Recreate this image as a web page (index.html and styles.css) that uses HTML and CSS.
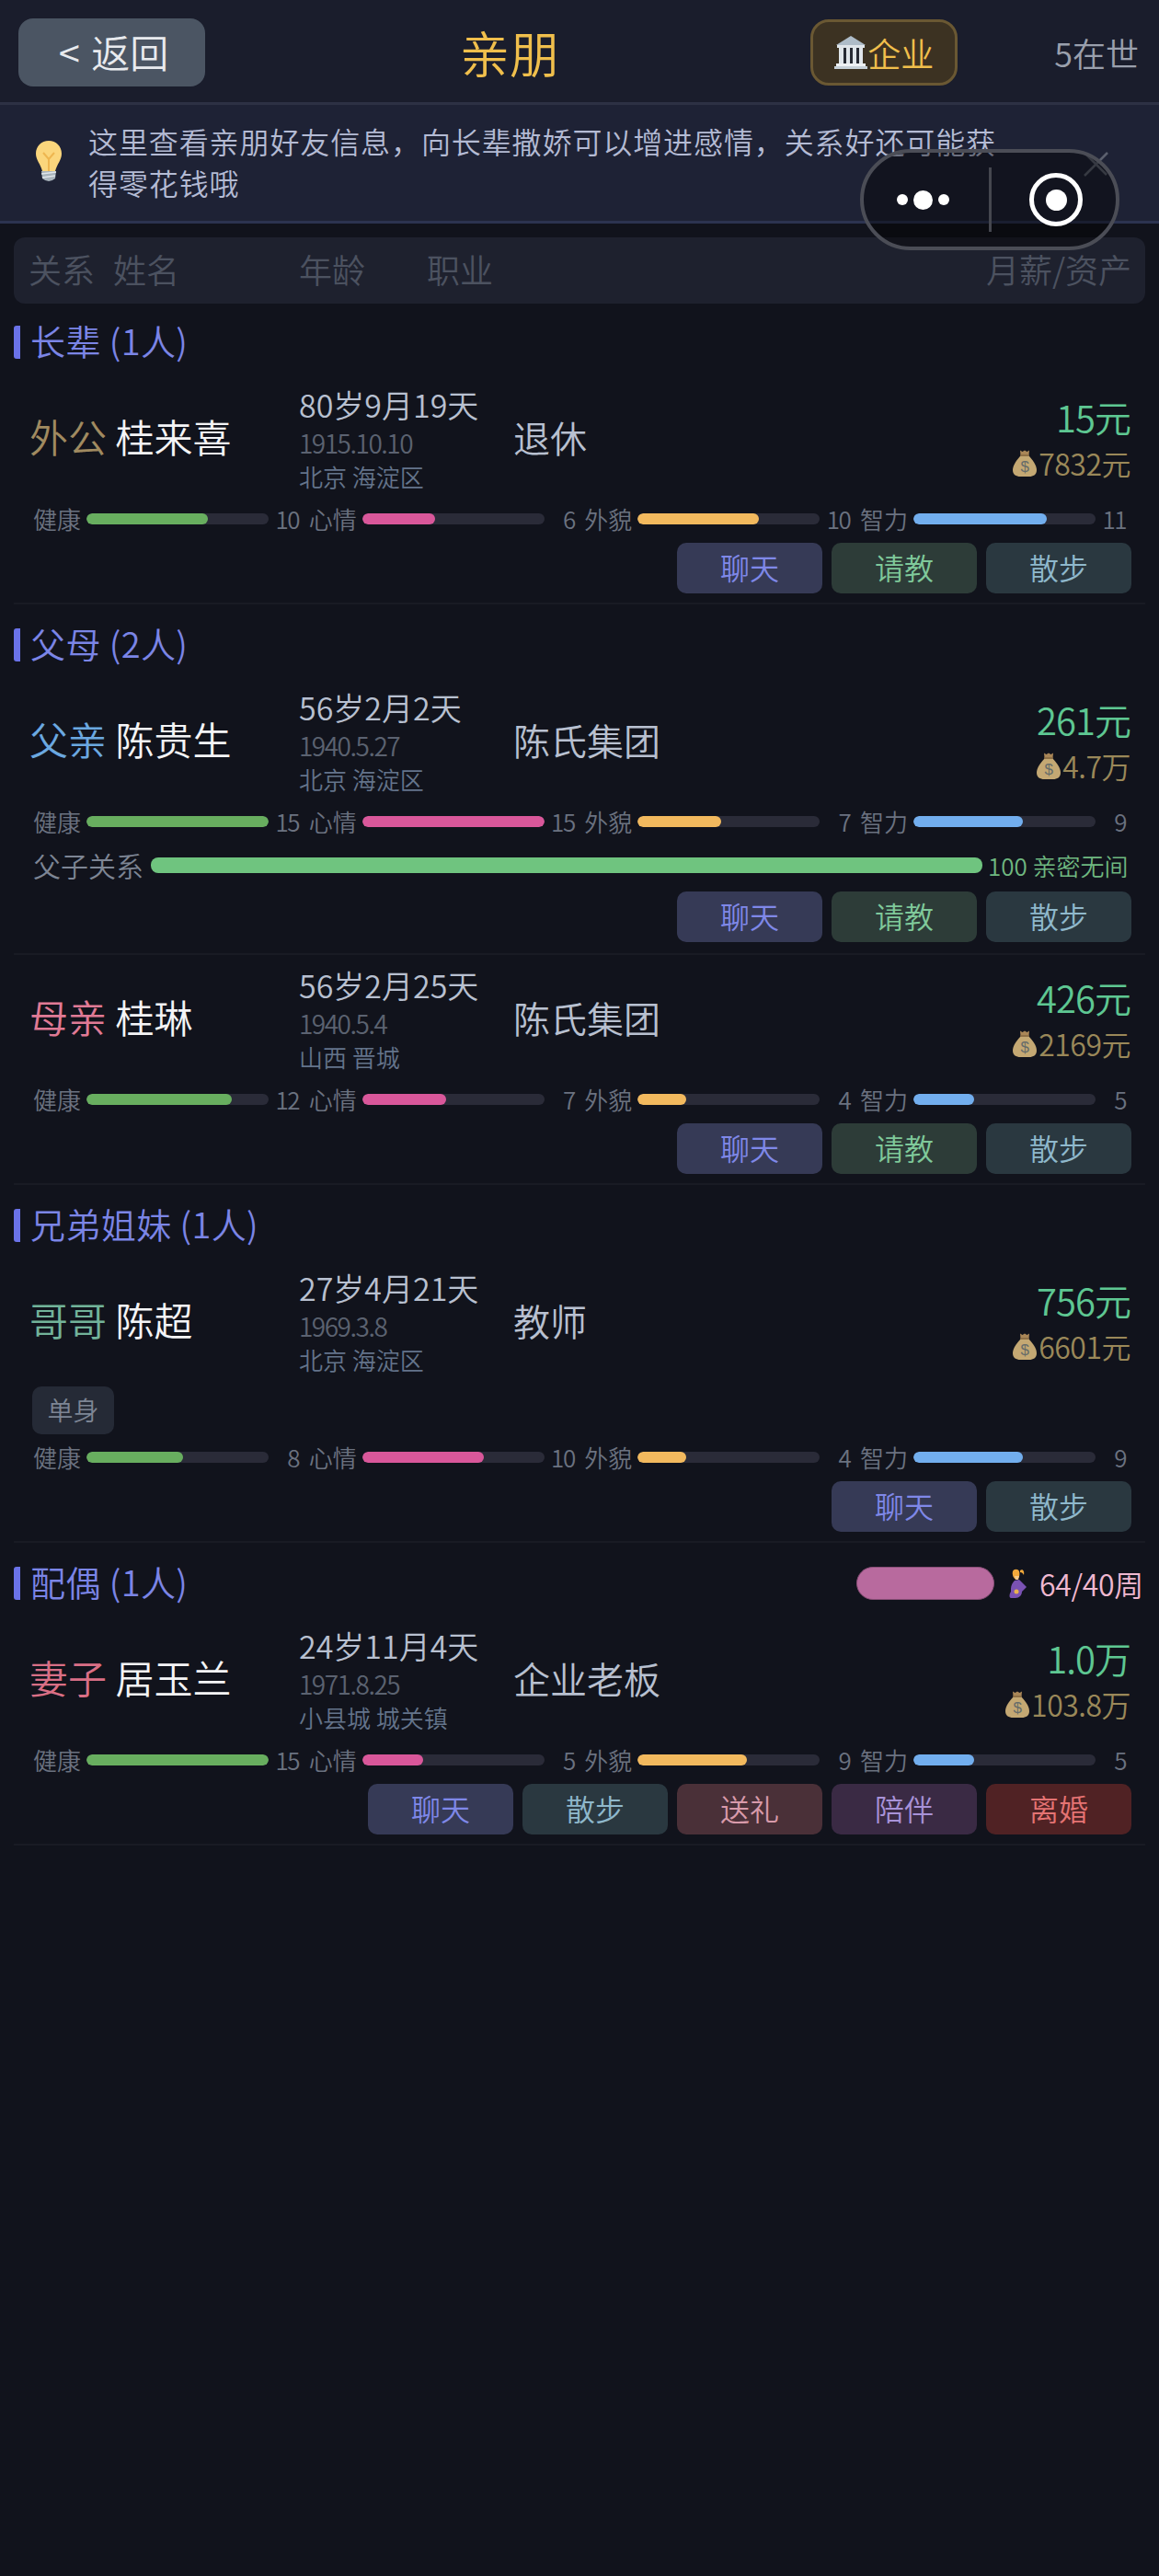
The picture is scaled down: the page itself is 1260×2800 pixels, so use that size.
FILE: index.html
```html
<!DOCTYPE html>
<html lang="zh-CN">
<head>
<meta charset="UTF-8">
<meta name="viewport" content="width=device-width, initial-scale=1.0">
<title>亲朋</title>
<link rel="stylesheet" href="styles.css">
</head>
<body>

<!-- 顶部 -->
<div class="topbar">
  <div class="back">&lt; 返回</div>
  <div class="title">亲朋</div>
  <div class="ent">
    <svg class="ent-icon" width="36" height="36" viewBox="0 0 36 36">
      <path d="M18 0 L34 10 L2 10 Z" fill="#aebcc8"/>
      <rect x="3" y="10" width="30" height="3" fill="#dfe5ea"/>
      <rect x="5" y="13" width="5" height="17" fill="#dfe5ea"/>
      <rect x="10" y="13" width="3" height="17" fill="#262a33"/>
      <rect x="13" y="13" width="4" height="17" fill="#dfe5ea"/>
      <rect x="17" y="13" width="3" height="17" fill="#262a33"/>
      <rect x="20" y="13" width="4" height="17" fill="#dfe5ea"/>
      <rect x="24" y="13" width="3" height="17" fill="#262a33"/>
      <rect x="27" y="13" width="4" height="17" fill="#dfe5ea"/>
      <rect x="2" y="30" width="32" height="3" fill="#eef1f4"/>
      <rect x="0" y="33" width="36" height="3" fill="#c6d0d8"/>
    </svg>
    <span>企业</span>
  </div>
  <div class="count">5在世</div>
</div>

<!-- 提示 -->
<div class="tip">
  <svg class="bulb" width="28" height="45" viewBox="0 0 28 45">
    <path d="M14 0 C6 0 0 6 0 14 C0 21 5 25 7 33 L21 33 C23 25 28 21 28 14 C28 6 22 0 14 0 Z" fill="#fbd67c"/>
    <path d="M8 13 L14 20 L20 13 M14 20 L14 33" fill="none" stroke="#eeb650" stroke-width="2"/>
    <path d="M6 33 L22 33 L21 41 Q14 47 7 41 Z" fill="#a9b4bc"/>
    <path d="M6 36 L22 34 M7 40 L21 38" stroke="#dfe5ea" stroke-width="1.500"/>
  </svg>
  <div class="tip-text">这里查看亲朋好友信息，向长辈撒娇可以增进感情，关系好还可能获得零花钱哦</div>
  <svg class="tip-close" width="27" height="27" viewBox="0 0 27 27">
    <path d="M1 26 L26 1 M3 3 L25 25" stroke="#5b606e" stroke-width="2.500" fill="none"/>
  </svg>
</div>

<!-- 小程序胶囊 -->
<div class="capsule">
  <span class="dot"></span><span class="dot dot-big"></span><span class="dot"></span>
  <span class="capsule-line"></span>
  <span class="target"><span class="target-in"></span></span>
</div>

<!-- 表头 -->
<div class="thead">
  <span class="th-rel">关系</span>
  <span class="th-name">姓名</span>
  <span class="th-age">年龄</span>
  <span class="th-job">职业</span>
  <span class="th-money">月薪/资产</span>
</div>

<!-- 长辈 -->
<div class="section">
  <div class="sec-head"><span class="sec-title">长辈 (1人)</span></div>
  <div class="row">
    <div class="main">
      <div class="who"><span class="rel c-tan">外公</span> 桂来喜</div>
      <div class="info">
        <div class="age">80岁9月19天</div>
        <div class="date">1915.10.10</div>
        <div class="place">北京 海淀区</div>
      </div>
      <div class="job">退休</div>
      <div class="money">
        <div class="pay">15元</div>
        <div class="assets">
          <svg class="bag" width="26" height="30" viewBox="0 0 26 30"><path d="M8 1.500 L10.500 3 L13 1.500 L15.500 3 L18 1.500 L17.500 7 L8.500 7 Z" fill="#a98657"/><path d="M9 7 C4 12 0 18 0 23 C0 28 4 30 8 30 L18 30 C22 30 26 28 26 23 C26 18 22 12 17 7 Z" fill="#c4a873"/><rect x="8.500" y="6" width="9" height="2" fill="#8f7046"/><text x="13" y="25" text-anchor="middle" font-size="17" fill="#666c6a">$</text></svg>
          <span>7832元</span>
        </div>
      </div>
    </div>
    <div class="stats">
      <div class="stat"><span class="lab">健康</span><span class="track"><span class="fill f-health" style="width:66.6%"></span></span><span class="val">10</span></div>
      <div class="stat"><span class="lab">心情</span><span class="track"><span class="fill f-mood" style="width:40%"></span></span><span class="val">6</span></div>
      <div class="stat"><span class="lab">外貌</span><span class="track"><span class="fill f-looks" style="width:66.6%"></span></span><span class="val">10</span></div>
      <div class="stat"><span class="lab">智力</span><span class="track"><span class="fill f-iq" style="width:73.3%"></span></span><span class="val">11</span></div>
    </div>
    <div class="btns">
      <span class="btn b-chat">聊天</span><span class="btn b-ask">请教</span><span class="btn b-walk">散步</span>
    </div>
  </div>
</div>

<!-- 父母 -->
<div class="section">
  <div class="sec-head"><span class="sec-title">父母 (2人)</span></div>
  <div class="row">
    <div class="main">
      <div class="who"><span class="rel c-blue">父亲</span> 陈贵生</div>
      <div class="info">
        <div class="age">56岁2月2天</div>
        <div class="date">1940.5.27</div>
        <div class="place">北京 海淀区</div>
      </div>
      <div class="job">陈氏集团</div>
      <div class="money">
        <div class="pay">261元</div>
        <div class="assets">
          <svg class="bag" width="26" height="30" viewBox="0 0 26 30"><path d="M8 1.500 L10.500 3 L13 1.500 L15.500 3 L18 1.500 L17.500 7 L8.500 7 Z" fill="#a98657"/><path d="M9 7 C4 12 0 18 0 23 C0 28 4 30 8 30 L18 30 C22 30 26 28 26 23 C26 18 22 12 17 7 Z" fill="#c4a873"/><rect x="8.500" y="6" width="9" height="2" fill="#8f7046"/><text x="13" y="25" text-anchor="middle" font-size="17" fill="#666c6a">$</text></svg>
          <span>4.7万</span>
        </div>
      </div>
    </div>
    <div class="stats">
      <div class="stat"><span class="lab">健康</span><span class="track"><span class="fill f-health" style="width:100%"></span></span><span class="val">15</span></div>
      <div class="stat"><span class="lab">心情</span><span class="track"><span class="fill f-mood" style="width:100%"></span></span><span class="val">15</span></div>
      <div class="stat"><span class="lab">外貌</span><span class="track"><span class="fill f-looks" style="width:46%"></span></span><span class="val">7</span></div>
      <div class="stat"><span class="lab">智力</span><span class="track"><span class="fill f-iq" style="width:60%"></span></span><span class="val">9</span></div>
    </div>
    <div class="bond">
      <span class="bond-lab">父子关系</span>
      <span class="bond-bar"></span>
      <span class="bond-val">100 亲密无间</span>
    </div>
    <div class="btns btns-bond">
      <span class="btn b-chat">聊天</span><span class="btn b-ask">请教</span><span class="btn b-walk">散步</span>
    </div>
  </div>
  <div class="row">
    <div class="main">
      <div class="who"><span class="rel c-pink">母亲</span> 桂琳</div>
      <div class="info">
        <div class="age">56岁2月25天</div>
        <div class="date">1940.5.4</div>
        <div class="place">山西 晋城</div>
      </div>
      <div class="job">陈氏集团</div>
      <div class="money">
        <div class="pay">426元</div>
        <div class="assets">
          <svg class="bag" width="26" height="30" viewBox="0 0 26 30"><path d="M8 1.500 L10.500 3 L13 1.500 L15.500 3 L18 1.500 L17.500 7 L8.500 7 Z" fill="#a98657"/><path d="M9 7 C4 12 0 18 0 23 C0 28 4 30 8 30 L18 30 C22 30 26 28 26 23 C26 18 22 12 17 7 Z" fill="#c4a873"/><rect x="8.500" y="6" width="9" height="2" fill="#8f7046"/><text x="13" y="25" text-anchor="middle" font-size="17" fill="#666c6a">$</text></svg>
          <span>2169元</span>
        </div>
      </div>
    </div>
    <div class="stats">
      <div class="stat"><span class="lab">健康</span><span class="track"><span class="fill f-health" style="width:80%"></span></span><span class="val">12</span></div>
      <div class="stat"><span class="lab">心情</span><span class="track"><span class="fill f-mood" style="width:46%"></span></span><span class="val">7</span></div>
      <div class="stat"><span class="lab">外貌</span><span class="track"><span class="fill f-looks" style="width:26.6%"></span></span><span class="val">4</span></div>
      <div class="stat"><span class="lab">智力</span><span class="track"><span class="fill f-iq" style="width:33.3%"></span></span><span class="val">5</span></div>
    </div>
    <div class="btns">
      <span class="btn b-chat">聊天</span><span class="btn b-ask">请教</span><span class="btn b-walk">散步</span>
    </div>
  </div>
</div>

<!-- 兄弟姐妹 -->
<div class="section">
  <div class="sec-head"><span class="sec-title">兄弟姐妹 (1人)</span></div>
  <div class="row">
    <div class="main">
      <div class="who"><span class="rel c-teal">哥哥</span> 陈超</div>
      <div class="info">
        <div class="age">27岁4月21天</div>
        <div class="date">1969.3.8</div>
        <div class="place">北京 海淀区</div>
      </div>
      <div class="job">教师</div>
      <div class="money">
        <div class="pay">756元</div>
        <div class="assets">
          <svg class="bag" width="26" height="30" viewBox="0 0 26 30"><path d="M8 1.500 L10.500 3 L13 1.500 L15.500 3 L18 1.500 L17.500 7 L8.500 7 Z" fill="#a98657"/><path d="M9 7 C4 12 0 18 0 23 C0 28 4 30 8 30 L18 30 C22 30 26 28 26 23 C26 18 22 12 17 7 Z" fill="#c4a873"/><rect x="8.500" y="6" width="9" height="2" fill="#8f7046"/><text x="13" y="25" text-anchor="middle" font-size="17" fill="#666c6a">$</text></svg>
          <span>6601元</span>
        </div>
      </div>
    </div>
    <div class="tags"><span class="tag">单身</span></div>
    <div class="stats stats-tag">
      <div class="stat"><span class="lab">健康</span><span class="track"><span class="fill f-health" style="width:53%"></span></span><span class="val">8</span></div>
      <div class="stat"><span class="lab">心情</span><span class="track"><span class="fill f-mood" style="width:66.6%"></span></span><span class="val">10</span></div>
      <div class="stat"><span class="lab">外貌</span><span class="track"><span class="fill f-looks" style="width:26.6%"></span></span><span class="val">4</span></div>
      <div class="stat"><span class="lab">智力</span><span class="track"><span class="fill f-iq" style="width:60%"></span></span><span class="val">9</span></div>
    </div>
    <div class="btns">
      <span class="btn b-chat">聊天</span><span class="btn b-walk">散步</span>
    </div>
  </div>
</div>

<!-- 配偶 -->
<div class="section">
  <div class="sec-head">
    <span class="sec-title">配偶 (1人)</span>
    <span class="preg">
      <span class="preg-bar"></span>
      <svg class="preg-icon" width="20" height="32" viewBox="0 0 20 32">
        <path d="M4 3 C5 0 10 0 11 3 C12 7 11 11 8 12 C5 11 3 7 4 3 Z" fill="#f3a93b"/>
        <path d="M12 2 C15 0 17 3 16 7 C15 5 14 4 12 4 Z" fill="#f3a93b"/>
        <path d="M6 8 L11 8 L10 12 L7 12 Z" fill="#f6c98a"/>
        <path d="M6 13 L11 12 L19 20 L14 25 C14 29 11 32 7 32 L2 32 C0 32 0 28 2 25 L2 22 C2 18 4 15 6 13 Z" fill="#7a52b3"/>
        <circle cx="8" cy="25" r="2.500" fill="#e9b24f"/>
      </svg>
      <span class="preg-text">64/40周</span>
    </span>
  </div>
  <div class="row">
    <div class="main">
      <div class="who"><span class="rel c-rose">妻子</span> 居玉兰</div>
      <div class="info">
        <div class="age">24岁11月4天</div>
        <div class="date">1971.8.25</div>
        <div class="place">小县城 城关镇</div>
      </div>
      <div class="job">企业老板</div>
      <div class="money">
        <div class="pay">1.0万</div>
        <div class="assets">
          <svg class="bag" width="26" height="30" viewBox="0 0 26 30"><path d="M8 1.500 L10.500 3 L13 1.500 L15.500 3 L18 1.500 L17.500 7 L8.500 7 Z" fill="#a98657"/><path d="M9 7 C4 12 0 18 0 23 C0 28 4 30 8 30 L18 30 C22 30 26 28 26 23 C26 18 22 12 17 7 Z" fill="#c4a873"/><rect x="8.500" y="6" width="9" height="2" fill="#8f7046"/><text x="13" y="25" text-anchor="middle" font-size="17" fill="#666c6a">$</text></svg>
          <span>103.8万</span>
        </div>
      </div>
    </div>
    <div class="stats">
      <div class="stat"><span class="lab">健康</span><span class="track"><span class="fill f-health" style="width:100%"></span></span><span class="val">15</span></div>
      <div class="stat"><span class="lab">心情</span><span class="track"><span class="fill f-mood" style="width:33.3%"></span></span><span class="val">5</span></div>
      <div class="stat"><span class="lab">外貌</span><span class="track"><span class="fill f-looks" style="width:60%"></span></span><span class="val">9</span></div>
      <div class="stat"><span class="lab">智力</span><span class="track"><span class="fill f-iq" style="width:33.3%"></span></span><span class="val">5</span></div>
    </div>
    <div class="btns">
      <span class="btn b-chat">聊天</span><span class="btn b-walk">散步</span><span class="btn b-gift">送礼</span><span class="btn b-stay">陪伴</span><span class="btn b-split">离婚</span>
    </div>
  </div>
</div>

</body>
</html>
```

FILE: styles.css
```css
* {
  box-sizing: border-box;
}

body {
  margin: 0;
  background-color: #11131c;
  color: #b8c0d0;
  font-family: "Noto Sans CJK SC", "Noto Sans", sans-serif;
  font-weight: 350;
  position: relative;
}

/* 顶部 */
.topbar {
  display: flex;
  align-items: center;
  height: 114px;
  padding: 3px 22px 0 20px;
  background-color: #1a1d2c;
  border-bottom: 3px solid #2d3144;
}

.back {
  width: 203px;
  height: 74px;
  padding-left: 4px;
  line-height: 72px;
  text-align: center;
  border-radius: 16px;
  background-color: #4b5563;
  color: #e8eaee;
  font-size: 42px;
  word-spacing: 3px;
}

.title {
  margin-left: 277px;
  font-size: 54px;
  line-height: 60px;
  color: #f0bf4c;
}

.ent {
  display: flex;
  align-items: center;
  justify-content: center;
  width: 160px;
  height: 72px;
  margin-left: auto;
  border: 3px solid #6a5833;
  border-radius: 20px;
  background-color: #3c3222;
  color: #f0bf4c;
  font-size: 36px;
}

.count {
  margin-left: 105px;
  font-size: 36px;
  color: #9aa0ad;
}

/* 提示 */
.tip {
  position: relative;
  display: flex;
  align-items: center;
  height: 129px;
  padding: 0 0 3px 39px;
  background-color: #1e2235;
  border-bottom: 3px solid #2c3350;
}

.bulb {
  flex: none;
  margin-right: 29px;
}

.tip-text {
  width: 1000px;
  font-size: 32px;
  line-height: 45px;
  letter-spacing: 0.9px;
  color: #b4bbd4;
}

.tip-close {
  position: absolute;
  top: 51px;
  right: 55px;
}

/* 小程序胶囊 */
.capsule {
  position: absolute;
  z-index: 5;
  top: 162px;
  left: 935px;
  display: flex;
  align-items: center;
  width: 282px;
  height: 110px;
  padding-left: 36px;
  border: 4px solid #4b4d56;
  border-radius: 55px;
  background-color: rgba(0, 0, 0, 0.4);
}

.dot {
  width: 12px;
  height: 12px;
  margin-right: 6px;
  border-radius: 50%;
  background-color: #fff;
}

.dot-big {
  width: 21px;
  height: 21px;
}

.capsule-line {
  width: 3px;
  height: 70px;
  margin-left: 37px;
  background-color: #45474f;
}

.target {
  display: flex;
  align-items: center;
  justify-content: center;
  width: 58px;
  height: 58px;
  margin-left: 41px;
  border: 5px solid #fff;
  border-radius: 50%;
}

.target-in {
  width: 23px;
  height: 23px;
  border-radius: 50%;
  background-color: #fff;
}

/* 表头 */
.thead {
  position: relative;
  display: flex;
  height: 72px;
  margin: 15px 15px -2px;
  border-radius: 12px;
  background-color: #1e212e;
  color: #4c5260;
  font-size: 36px;
  line-height: 68px;
}

.th-rel {
  width: 92px;
  margin-left: 16px;
}

.th-name {
  width: 202px;
}

.th-age {
  width: 139px;
}

.th-money {
  margin-left: auto;
  margin-right: 15px;
}

/* 分组 */
.section {
  margin: 26px 15px 0;
}

.sec-head {
  display: flex;
  align-items: center;
  justify-content: space-between;
  height: 36px;
  margin-bottom: 17px;
}

.sec-title {
  padding-left: 11px;
  border-left: 7px solid #6a72e8;
  border-radius: 3px;
  height: 36px;
  line-height: 32px;
  font-size: 38px;
  letter-spacing: 0.4px;
  color: #7b85e6;
}

.preg {
  display: flex;
  align-items: center;
  margin-right: 2px;
}

.preg-bar {
  width: 150px;
  height: 36px;
  border: 1px solid #8a4f78;
  border-radius: 18px;
  background-color: #b86a9e;
}

.preg-icon {
  margin: 0 13px 0 16px;
}

.preg-text {
  font-size: 32px;
  letter-spacing: -0.3px;
  color: #f0b8d0;
}

/* 行 */
.row {
  padding: 11px 0 10px;
  border-bottom: 2px solid #191b24;
}

.main {
  display: flex;
  align-items: center;
}

.who {
  width: 310px;
  margin-bottom: 7px;
  padding-left: 17px;
  font-size: 42px;
  color: #f4f4f6;
}

.c-tan {
  color: #a08a60;
}

.c-blue {
  color: #6ba8e0;
}

.c-pink {
  color: #e07a95;
}

.c-teal {
  color: #72b39a;
}

.c-rose {
  color: #d96f85;
}

.info {
  width: 233px;
}

.age {
  height: 44px;
  line-height: 44px;
  font-size: 34px;
}

.date {
  height: 38px;
  line-height: 38px;
  font-size: 28px;
  letter-spacing: -1.5px;
  color: #5b6270;
}

.place {
  height: 36px;
  line-height: 36px;
  font-size: 26px;
  color: #64748b;
}

.job {
  flex: 1;
  margin-bottom: 5px;
  font-size: 40px;
}

.money {
  padding: 1px 16px 0 0;
  text-align: right;
}

.pay {
  height: 50px;
  line-height: 50px;
  font-size: 40px;
  letter-spacing: -1px;
  color: #5ec792;
}

.assets {
  display: flex;
  align-items: center;
  justify-content: flex-end;
  height: 50px;
  font-size: 32px;
  letter-spacing: -0.5px;
  color: #9a8859;
}

.bag {
  margin-right: 2px;
  font-family: "Liberation Sans", sans-serif;
}

/* 属性条 */
.stats {
  display: grid;
  grid-template-columns: repeat(4, 1fr);
  column-gap: 10.67px;
  height: 36px;
  margin-top: 9px;
  padding: 0 21px;
  font-size: 26px;
  color: #6b7280;
}

.stats-tag {
  margin-top: 6px;
}

.stat {
  display: flex;
  align-items: center;
}

.lab {
  flex: none;
  width: 52px;
  margin-right: 6px;
}

.track {
  flex: 1;
  height: 12px;
  border-radius: 6px;
  background-color: #2a2b38;
  overflow: hidden;
}

.fill {
  display: block;
  height: 100%;
  border-radius: 6px;
}

.f-health {
  background-color: #68ae5f;
}

.f-mood {
  background-color: #d9579a;
}

.f-looks {
  background-color: #f2b95e;
}

.f-iq {
  background-color: #72aeee;
}

.val {
  flex: none;
  width: 33px;
  text-align: right;
  letter-spacing: -1.5px;
}

/* 亲密度 */
.bond {
  display: flex;
  align-items: center;
  height: 36px;
  margin-top: 12px;
  padding: 0 21px;
}

.bond-lab {
  flex: none;
  width: 128px;
  font-size: 30px;
  color: #7d8594;
}

.bond-bar {
  flex: none;
  width: 904px;
  height: 17px;
  border-radius: 8px;
  background-color: #6fc47f;
}

.bond-val {
  margin-left: 6px;
  font-size: 26px;
  white-space: nowrap;
  color: #6fb880;
}

/* 标签 */
.tags {
  margin-top: 11px;
  padding-left: 20px;
}

.tag {
  display: inline-block;
  width: 89px;
  height: 52px;
  line-height: 50px;
  text-align: center;
  border-radius: 10px;
  background-color: #252a36;
  color: #7d8594;
  font-size: 28px;
}

/* 按钮 */
.btns {
  display: flex;
  justify-content: flex-end;
  gap: 10px;
  margin-top: 9px;
  padding-right: 15px;
}

.btns-bond {
  margin-top: 11px;
  margin-bottom: 2px;
}

.btn {
  width: 158px;
  height: 55px;
  line-height: 53px;
  text-align: center;
  border-radius: 10px;
  font-size: 32px;
}

.b-chat {
  background-color: #363a56;
  color: #7f88e8;
}

.b-ask {
  background-color: #2d3c38;
  color: #7fc99a;
}

.b-walk {
  background-color: #2a3840;
  color: #8fb8cc;
}

.b-gift {
  background-color: #4a3038;
  color: #d89aaa;
}

.b-stay {
  background-color: #3a2a44;
  color: #a892d8;
}

.b-split {
  background-color: #502224;
  color: #e57373;
}
```
